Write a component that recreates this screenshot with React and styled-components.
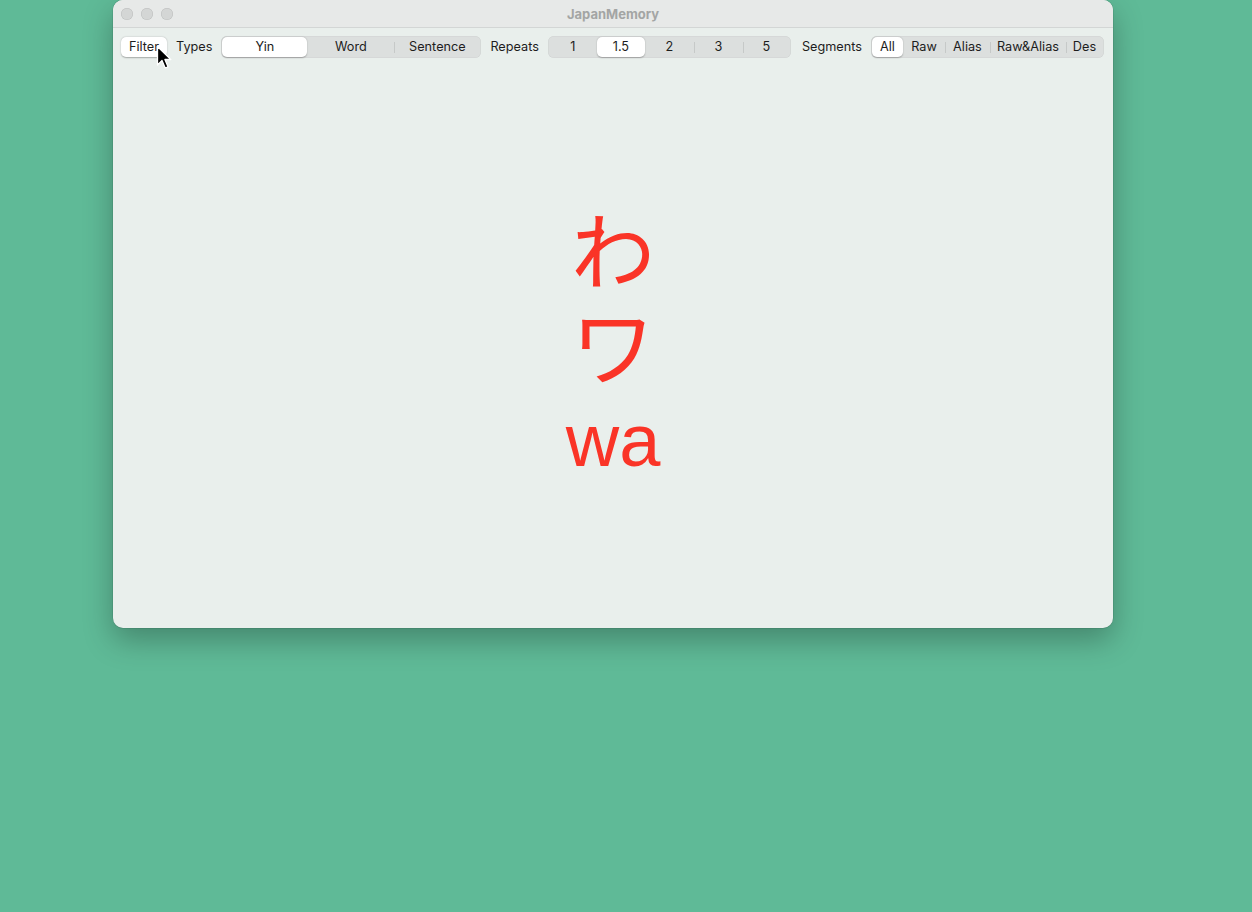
import styled, { createGlobalStyle } from 'styled-components';

const GlobalStyle = createGlobalStyle`
  html, body {
    margin: 0;
    padding: 0;
    background: #5fba97;
  }
  body {
    font-family: Inter, "Liberation Sans", "Noto Sans CJK JP", sans-serif;
  }
`;

const Desktop = styled.div`
  width: 1252px;
  height: 912px;
  padding-left: 113px;
  box-sizing: border-box;
`;

const Window = styled.div`
  position: relative;
  width: 1000px;
  height: 628px;
  border-radius: 10px;
  overflow: hidden;
  background: #e9efec;
  box-shadow: 0 12px 30px rgba(0, 0, 0, 0.28), 0 0 0 0.5px rgba(0, 0, 0, 0.15);
  display: flex;
  flex-direction: column;
`;

const TitleBar = styled.div`
  height: 28px;
  flex-shrink: 0;
  background: #e7e9e8;
  border-bottom: 1px solid #d3d6d5;
  display: flex;
  align-items: center;
  padding-left: 8px;
  position: relative;
  box-sizing: border-box;
`;

const Lights = styled.div`
  display: flex;
  gap: 8px;
`;

const Light = styled.span`
  width: 12px;
  height: 12px;
  border-radius: 50%;
  background: #d4d6d5;
  box-shadow: inset 0 0 0 0.5px #bcbebd;
`;

const Title = styled.div`
  position: absolute;
  left: 0;
  right: 0;
  text-align: center;
  font-size: 13px;
  font-weight: 700;
  color: #a3a5a4;
`;

const Toolbar = styled.div`
  height: 36px;
  flex-shrink: 0;
  display: flex;
  align-items: center;
  padding: 1px 8px 0;
  box-sizing: border-box;
  gap: 9px;
`;

const Button = styled.div`
  height: 20px;
  width: 46px;
  display: flex;
  align-items: center;
  justify-content: center;
  background: #ffffff;
  border-radius: 5px;
  font-size: 12.7px;
  color: #1d1d1d;
  box-shadow: 0 0.5px 1.5px rgba(0, 0, 0, 0.3);
`;

const Label = styled.span`
  font-size: 12.7px;
  color: #1d1d1d;
  margin-left: ${(p) => p.$extra || 0}px;
`;

const Segmented = styled.div`
  height: 22px;
  display: flex;
  align-items: center;
  background: #dcdfde;
  border-radius: 6px;
  padding: 0 1px;
  box-shadow: inset 0 0 0 0.5px #cfd2d1;
`;

const Segment = styled.div`
  position: relative;
  height: 20px;
  width: ${(p) => p.$w}px;
  display: flex;
  align-items: center;
  justify-content: center;
  font-size: 12.7px;
  color: #1d1d1d;
  border-radius: 5px;
  box-sizing: border-box;
  background: ${(p) => (p.$on ? '#ffffff' : 'transparent')};
  box-shadow: ${(p) => (p.$on ? '0 0.5px 1.5px rgba(0,0,0,0.28)' : 'none')};

  &::before {
    content: '';
    display: ${(p) => (p.$divider ? 'block' : 'none')};
    position: absolute;
    left: 0;
    top: 5px;
    width: 1px;
    height: 11px;
    background: #c6c9c8;
  }
`;

const Stage = styled.div`
  flex: 1;
  display: flex;
  flex-direction: column;
  align-items: center;
  justify-content: center;
  padding-bottom: 2px;
`;

const Big = styled.div`
  height: 96px;
  display: flex;
  align-items: center;
  font-size: 84px;
  line-height: 1;
  color: #fa3427;
  font-family: "Noto Sans CJK JP", "Liberation Sans", sans-serif;
  font-weight: 400;
`;

const Roman = styled(Big)`
  font-family: "Liberation Sans", Arial, sans-serif;
  font-size: 74px;
  height: 100px;
`;

const Cursor = styled.svg`
  position: absolute;
  left: 43px;
  top: 45px;
`;

function Control({ items, selected, widths }) {
  return (
    <Segmented>
      {items.map((it, i) => {
        const on = i === selected;
        const prevOn = i - 1 === selected;
        return (
          <Segment key={it} $on={on} $w={widths[i]} $divider={i > 0 && !on && !prevOn}>
            {it}
          </Segment>
        );
      })}
    </Segmented>
  );
}

export default function App() {
  return (
    <>
      <GlobalStyle />
      <Desktop>
        <Window>
          <TitleBar>
            <Lights>
              <Light />
              <Light />
              <Light />
            </Lights>
            <Title>JapanMemory</Title>
          </TitleBar>
          <Toolbar>
            <Button>Filter</Button>
            <Label>Types</Label>
            <Control items={['Yin', 'Word', 'Sentence']} selected={0} widths={[85, 87, 86]} />
            <Label>Repeats</Label>
            <Control items={['1', '1.5', '2', '3', '5']} selected={1} widths={[48, 48, 49, 49, 47]} />
            <Label $extra={2}>Segments</Label>
            <Control
              items={['All', 'Raw', 'Alias', 'Raw&Alias', 'Des']}
              selected={0}
              widths={[31, 42, 45, 76, 37]}
            />
          </Toolbar>
          <Stage>
            <Big>わ</Big>
            <Big>ワ</Big>
            <Roman>wa</Roman>
          </Stage>
          <Cursor width="16" height="26" viewBox="0 0 16 26">
            <path
              d="M1.5 1.5 L1.5 20 L6 15.5 L9.2 23 L12 21.8 L8.9 14.5 L14.8 14.5 Z"
              fill="#000"
              stroke="#fff"
              strokeWidth="1.3"
              strokeLinejoin="round"
            />
          </Cursor>
        </Window>
      </Desktop>
    </>
  );
}
